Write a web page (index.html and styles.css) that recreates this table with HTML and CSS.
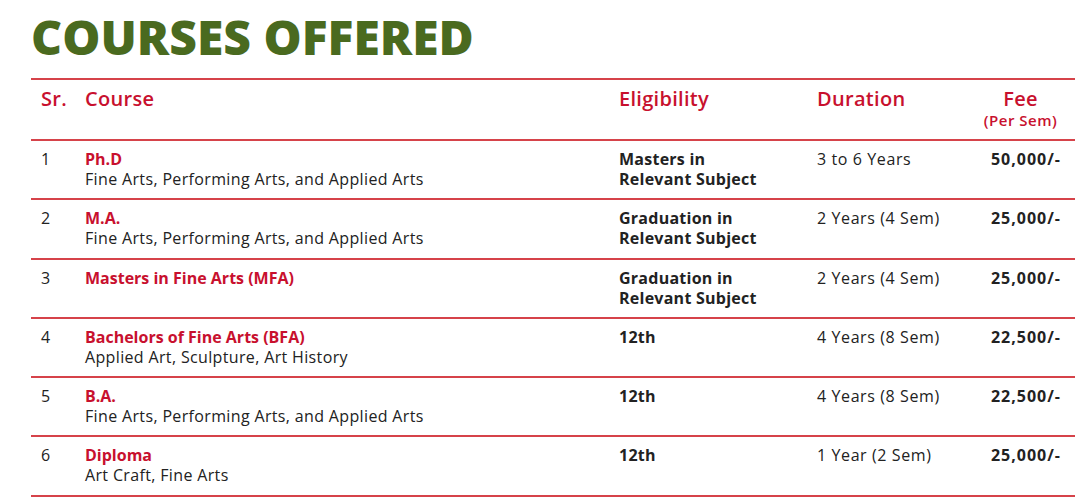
FILE: index.html
```html
<!DOCTYPE html>
<html>
<head>
<meta charset="utf-8">
<link rel="stylesheet" href="styles.css">
</head>
<body>
<section class="courses">
  <h1 class="title">COURSES OFFERED</h1>
  <table class="course-table">
    <colgroup>
      <col class="c-sr"><col class="c-course"><col class="c-elig"><col class="c-dur"><col class="c-fee">
    </colgroup>
    <thead>
      <tr>
        <th class="sr">Sr.</th>
        <th>Course</th>
        <th>Eligibility</th>
        <th>Duration</th>
        <th class="fee">Fee<span class="per">(Per Sem)</span></th>
      </tr>
    </thead>
    <tbody>
      <tr>
        <td class="sr">1</td>
        <td><span class="name">Ph.D</span><span class="sub">Fine Arts, Performing Arts, and Applied Arts</span></td>
        <td class="elig">Masters in<br>Relevant Subject</td>
        <td class="dur">3 to 6 Years</td>
        <td class="fee">50,000/-</td>
      </tr>
      <tr>
        <td class="sr">2</td>
        <td><span class="name">M.A.</span><span class="sub">Fine Arts, Performing Arts, and Applied Arts</span></td>
        <td class="elig">Graduation in<br>Relevant Subject</td>
        <td class="dur">2 Years (4 Sem)</td>
        <td class="fee">25,000/-</td>
      </tr>
      <tr>
        <td class="sr">3</td>
        <td><span class="name">Masters in Fine Arts (MFA)</span></td>
        <td class="elig">Graduation in<br>Relevant Subject</td>
        <td class="dur">2 Years (4 Sem)</td>
        <td class="fee">25,000/-</td>
      </tr>
      <tr>
        <td class="sr">4</td>
        <td><span class="name">Bachelors of Fine Arts (BFA)</span><span class="sub">Applied Art, Sculpture, Art History</span></td>
        <td class="elig">12th</td>
        <td class="dur">4 Years (8 Sem)</td>
        <td class="fee">22,500/-</td>
      </tr>
      <tr>
        <td class="sr">5</td>
        <td><span class="name">B.A.</span><span class="sub">Fine Arts, Performing Arts, and Applied Arts</span></td>
        <td class="elig">12th</td>
        <td class="dur">4 Years (8 Sem)</td>
        <td class="fee">22,500/-</td>
      </tr>
      <tr>
        <td class="sr">6</td>
        <td><span class="name">Diploma</span><span class="sub">Art Craft, Fine Arts</span></td>
        <td class="elig">12th</td>
        <td class="dur">1 Year (2 Sem)</td>
        <td class="fee">25,000/-</td>
      </tr>
    </tbody>
  </table>
</section>
</body>
</html>
```
FILE: styles.css
```css
html, body {
  margin: 0;
  padding: 0;
  background: #ffffff;
}
body {
  font-family: "Open Sans", "Noto Sans", sans-serif;
  color: #222222;
}
.courses {
  padding: 7px 17px 0 31px;
}
.title {
  margin: 0 0 11px 0;
  font-family: "Open Sans", sans-serif;
  font-weight: 800;
  font-size: 48px;
  line-height: 60px;
  color: #4a6a1f;
}
.course-table {
  width: 1044px;
  border-collapse: collapse;
  table-layout: fixed;
}
.c-sr { width: 54px; }
.c-course { width: 534px; }
.c-elig { width: 198px; }
.c-dur { width: 149px; }
.c-fee { width: 109px; }
.course-table tr {
  border-top: 2px solid #d6434a;
  border-bottom: 2px solid #d6434a;
}
.course-table th {
  text-align: left;
  vertical-align: top;
  color: #c8102e;
  font-weight: 600;
  font-size: 20px;
  line-height: 24px;
  letter-spacing: 0.3px;
  padding: 7px 0 10px 0;
  height: 42px;
}
.course-table th.sr,
.course-table td.sr {
  padding-left: 10px;
}
.course-table th.fee {
  text-align: center;
}
.per {
  display: block;
  font-size: 15px;
  line-height: 18px;
  font-weight: 600;
  letter-spacing: 0.5px;
}
.course-table td {
  vertical-align: top;
  font-size: 16px;
  line-height: 20px;
  padding: 8px 0 9px 0;
  height: 40.3px;
}
.name {
  display: block;
  color: #c8102e;
  font-weight: 700;
}
.sub {
  display: block;
  letter-spacing: 0.35px;
}
.elig {
  font-weight: 700;
  letter-spacing: 0.25px;
}
.dur {
  letter-spacing: 0.6px;
}
.course-table td.fee {
  text-align: right;
  font-weight: 700;
  letter-spacing: 1px;
  padding-right: 14px;
}
```
